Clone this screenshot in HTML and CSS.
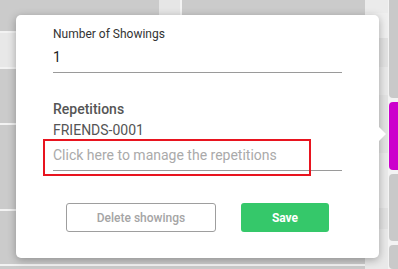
FILE: index.html
```html
<!DOCTYPE html>
<html lang="en">
<head>
    <meta charset="utf-8">
    <title>Showings</title>
    <link rel="stylesheet" href="styles.css">
</head>

<body>
<div class="screen">
    <!-- faded calendar behind the popover -->
    <div class="board">
        <div class="row r-top">
            <div class="cell wide"></div>
            <div class="cell light narrow"></div>
            <div class="cell fill"></div>
        </div>
        <div class="row r-light"></div>
        <div class="row r-mid"></div>
        <div class="row r-big"></div>
        <div class="row r-low"></div>
        <div class="row r-end"></div>
    </div>
    <div class="lane">
        <div class="band b1"></div>
        <div class="band b2"></div>
        <div class="band b3"></div>
        <div class="band b4"></div>
        <div class="band b5"></div>
        <div class="band b6"></div>
        <div class="band b7"></div>
        <div class="band b8"></div>
    </div>
    <div class="rail">
        <div class="block first"></div>
        <div class="block magenta"></div>
        <div class="block"></div>
        <div class="block last"></div>
    </div>

    <div class="popover">
        <div class="field">
            <label class="field-label">Number of Showings</label>
            <div class="field-input">1</div>
        </div>

        <div class="section">
            <div class="section-title">Repetitions</div>
            <div class="repetition">FRIENDS-0001</div>
            <div class="field-input placeholder">Click here to manage the repetitions</div>
        </div>

        <div class="actions">
            <button class="btn btn-outline">Delete showings</button>
            <button class="btn btn-save">Save</button>
        </div>

        <div class="highlight"></div>
    </div>
</div>
</body>
</html>
```

FILE: styles.css
```css
body {
    margin: 0;
    font-family: Roboto, "Liberation Sans", sans-serif;
    overflow: hidden;
}

.screen {
    position: relative;
    width: 398px;
    height: 269px;
    display: flex;
    background-color: #f3f3f3;
    overflow: hidden;
}

/* background board */
.board {
    width: 365px;
    display: flex;
    flex-direction: column;
    gap: 2px;
}

.row {
    background-color: #cbcbcb;
}

.r-top {
    height: 31px;
    display: flex;
    background-color: #f3f3f3;
}

.cell {
    background-color: #cbcbcb;
}

.cell.wide {
    width: 159px;
}

.cell.narrow {
    width: 21px;
    margin-right: 2px;
}

.cell.fill {
    flex: 1;
}

.cell.light {
    background-color: #e6e6e6;
}

.r-light {
    height: 34px;
    background-color: #e8e8e8;
}

.r-mid {
    height: 54px;
}

.r-big {
    height: 84px;
}

.r-low {
    height: 53px;
}

.r-end {
    flex: 1;
}

.lane {
    width: 23px;
    display: flex;
    flex-direction: column;
    margin-right: 1px;
}

.band {
    background-color: #e9e9e9;
}

.b1 { height: 13px; background-color: #ebebeb; }
.b2 { height: 25px; background-color: #efefef; }
.b3 { height: 29px; background-color: #e2e2e2; }
.b4 { height: 28px; background-color: #e9e9e9; }
.b5 { height: 58px; background-color: #e3e3e3; }
.b6 { height: 55px; background-color: #eaeaea; }
.b7 { height: 21px; background-color: #e2e2e2; }
.b8 { flex: 1; background-color: #e9e9e9; }

.rail {
    flex: 1;
    display: flex;
    flex-direction: column;
    gap: 4px;
    margin-top: -4px;
}

.block {
    height: 67px;
    background-color: #c9c9c9;
    border-radius: 4px 0 0 4px;
}

.block.first {
    height: 102px;
}

.block.magenta {
    height: 68px;
    background-color: #cc00cc;
}

.block.last {
    flex: 1;
}

/* popover */
.popover {
    position: absolute;
    left: 16px;
    top: 15px;
    width: 363px;
    height: 243px;
    box-sizing: border-box;
    padding: 11px 37px 26px;
    background-color: #fff;
    border-radius: 5px;
    box-shadow: 0 2px 9px rgba(0, 0, 0, 0.3);
}

.popover::after {
    content: "";
    position: absolute;
    right: -7px;
    top: 112px;
    border-top: 7px solid transparent;
    border-bottom: 7px solid transparent;
    border-left: 7px solid #fff;
}

.field-label {
    display: block;
    font-size: 12px;
    line-height: 16px;
    color: #333;
}

.field-input {
    margin-top: 5px;
    padding-bottom: 5px;
    font-size: 14px;
    line-height: 20px;
    color: #222;
    border-bottom: 1px solid #9a9a9a;
}

.section {
    margin-top: 26px;
}

.section-title {
    font-size: 14px;
    font-weight: 500;
    line-height: 20px;
    color: #555;
}

.repetition {
    margin-top: 1px;
    font-size: 14px;
    line-height: 20px;
    color: #555;
}

.placeholder {
    color: #aaa;
}

.actions {
    margin-top: 32px;
    display: flex;
    justify-content: center;
    gap: 25px;
}

.btn {
    height: 29px;
    box-sizing: border-box;
    border-radius: 3px;
    font-family: Roboto, "Liberation Sans", sans-serif;
    font-size: 12px;
    font-weight: 500;
    cursor: pointer;
}

.btn-outline {
    width: 150px;
    background-color: #fff;
    border: 1px solid #9e9e9e;
    color: #a5a5a5;
}

.btn-save {
    width: 88px;
    background-color: #35c86a;
    border: none;
    color: #fff;
    font-weight: 700;
}

.highlight {
    position: absolute;
    left: 27px;
    top: 124px;
    width: 268px;
    height: 37px;
    box-sizing: border-box;
    border: 2px solid #e8141f;
}
```
